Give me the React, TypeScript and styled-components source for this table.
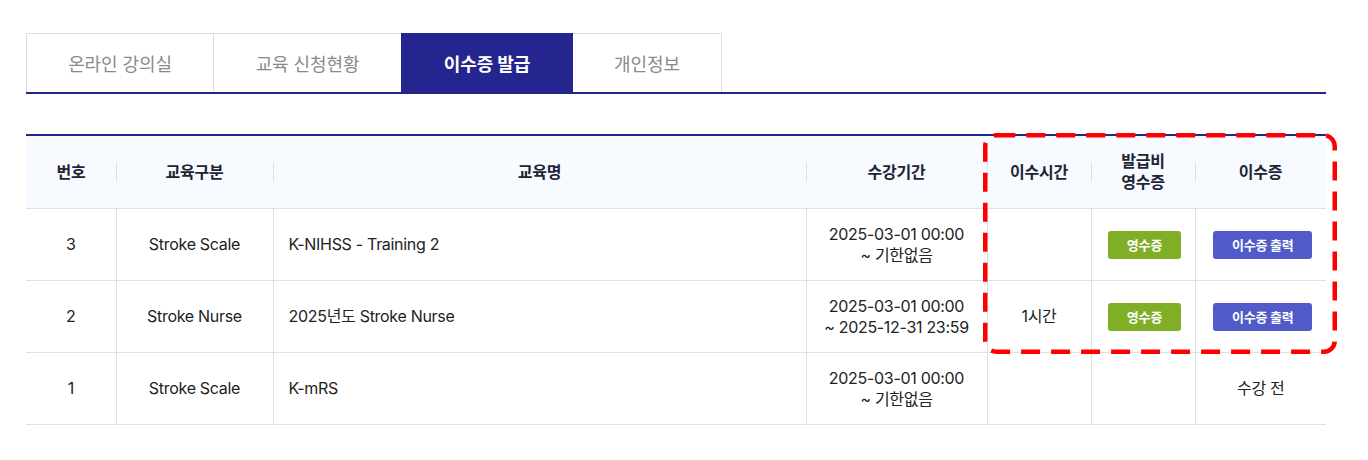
import React from "react";
import styled, { createGlobalStyle } from "styled-components";

const GlobalStyle = createGlobalStyle`
  html, body {
    margin: 0;
    padding: 0;
    background: #ffffff;
  }
  body {
    font-family: "Inter", "Noto Sans CJK KR", sans-serif;
    color: #222;
  }
`;

const Page = styled.div`
  width: 1300px;
  padding: 33px 0 0 26px;
`;

const TabBar = styled.ul`
  display: flex;
  margin: 0;
  padding: 0;
  list-style: none;
  border-bottom: 2px solid #25258f;
`;

const Tab = styled.li<{ $active?: boolean; $width: number }>`
  width: ${(p) => p.$width}px;
  height: 59px;
  box-sizing: border-box;
  display: flex;
  align-items: center;
  justify-content: center;
  border: 1px solid ${(p) => (p.$active ? "#25258f" : "#dddddd")};
  border-bottom: none;
  margin-left: -1px;
  background: ${(p) => (p.$active ? "#25258f" : "#ffffff")};
  color: ${(p) => (p.$active ? "#ffffff" : "#8a8a8a")};
  font-size: 18px;
  font-weight: ${(p) => (p.$active ? 700 : 400)};
  letter-spacing: -0.1px;
  position: relative;
  z-index: ${(p) => (p.$active ? 1 : 0)};

  &:first-child {
    margin-left: 0;
  }
`;

const Board = styled.div`
  position: relative;
  margin-top: 40px;
`;

const Table = styled.table`
  width: 1300px;
  border-collapse: collapse;
  table-layout: fixed;
  border-top: 2px solid #25258f;
`;

const HeadCell = styled.th`
  position: relative;
  height: 72px;
  padding: 0;
  background: #f7faff;
  border-bottom: 1px solid #dbe2e8;
  color: #1b2536;
  font-size: 16px;
  font-weight: 700;
  line-height: 21px;
  text-align: center;
  letter-spacing: -0.2px;

  & + &::before {
    content: "";
    position: absolute;
    left: 0;
    top: 26px;
    height: 20px;
    border-left: 1px solid #dbe2e8;
  }
`;

const Cell = styled.td<{ $left?: boolean }>`
  height: 71px;
  padding: 0 ${(p) => (p.$left ? "15px" : "0")};
  border-bottom: 1px solid #dbe2e8;
  border-left: 1px solid #dbe2e8;
  font-size: 16px;
  line-height: 21px;
  color: #222;
  text-align: ${(p) => (p.$left ? "left" : "center")};
  letter-spacing: -0.3px;
  white-space: nowrap;

  &:first-child {
    border-left: none;
  }
`;

const SmallButton = styled.button<{ $tone: "green" | "blue" }>`
  width: ${(p) => (p.$tone === "green" ? 73 : 99)}px;
  height: 28px;
  margin-left: ${(p) => (p.$tone === "green" ? 3 : 4)}px;
  padding: 0;
  border: none;
  border-radius: 3px;
  background: ${(p) => (p.$tone === "green" ? "#80ae26" : "#505ac8")};
  color: #ffffff;
  font-family: inherit;
  font-size: 13px;
  font-weight: 700;
  letter-spacing: -0.2px;
  cursor: pointer;
  vertical-align: middle;
`;

const Highlight = styled.svg`
  position: absolute;
  left: 957px;
  top: -1px;
  width: 354px;
  height: 221px;
  pointer-events: none;
  overflow: visible;
`;

interface Course {
  no: number;
  category: string;
  title: string;
  start: string;
  end: string;
  hours: string;
  issued: boolean;
}

const courses: Course[] = [
  {
    no: 3,
    category: "Stroke Scale",
    title: "K-NIHSS - Training 2",
    start: "2025-03-01 00:00",
    end: "~ 기한없음",
    hours: "",
    issued: true,
  },
  {
    no: 2,
    category: "Stroke Nurse",
    title: "2025년도 Stroke Nurse",
    start: "2025-03-01 00:00",
    end: "~ 2025-12-31 23:59",
    hours: "1시간",
    issued: true,
  },
  {
    no: 1,
    category: "Stroke Scale",
    title: "K-mRS",
    start: "2025-03-01 00:00",
    end: "~ 기한없음",
    hours: "",
    issued: false,
  },
];

const tabs = [
  { name: "온라인 강의실", width: 188 },
  { name: "교육 신청현황", width: 189 },
  { name: "이수증 발급", width: 172 },
  { name: "개인정보", width: 150 },
];

const widths = [90, 157, 533, 181, 104, 104, 131];

export default function App() {
  return (
    <Page>
      <GlobalStyle />
      <TabBar>
        {tabs.map((t) => (
          <Tab key={t.name} $width={t.width} $active={t.name === "이수증 발급"}>
            {t.name}
          </Tab>
        ))}
      </TabBar>

      <Board>
        <Table>
          <colgroup>
            {widths.map((w, i) => (
              <col key={i} style={{ width: w }} />
            ))}
          </colgroup>
          <thead>
            <tr>
              <HeadCell>번호</HeadCell>
              <HeadCell>교육구분</HeadCell>
              <HeadCell>교육명</HeadCell>
              <HeadCell>수강기간</HeadCell>
              <HeadCell>이수시간</HeadCell>
              <HeadCell>
                발급비
                <br />
                영수증
              </HeadCell>
              <HeadCell>이수증</HeadCell>
            </tr>
          </thead>
          <tbody>
            {courses.map((c) => (
              <tr key={c.no}>
                <Cell>{c.no}</Cell>
                <Cell>{c.category}</Cell>
                <Cell $left>{c.title}</Cell>
                <Cell>
                  {c.start}
                  <br />
                  {c.end}
                </Cell>
                <Cell>{c.hours}</Cell>
                <Cell>
                  {c.issued && <SmallButton $tone="green">영수증</SmallButton>}
                </Cell>
                <Cell>
                  {c.issued ? (
                    <SmallButton $tone="blue">이수증 출력</SmallButton>
                  ) : (
                    "수강 전"
                  )}
                </Cell>
              </tr>
            ))}
          </tbody>
        </Table>

        <Highlight viewBox="0 0 354 221">
          <rect
            x="2.25"
            y="2.25"
            width="349.5"
            height="216.5"
            rx="11"
            fill="none"
            stroke="#ff0000"
            strokeWidth="4.5"
            strokeDasharray="19 11"
          />
        </Highlight>
      </Board>
    </Page>
  );
}
